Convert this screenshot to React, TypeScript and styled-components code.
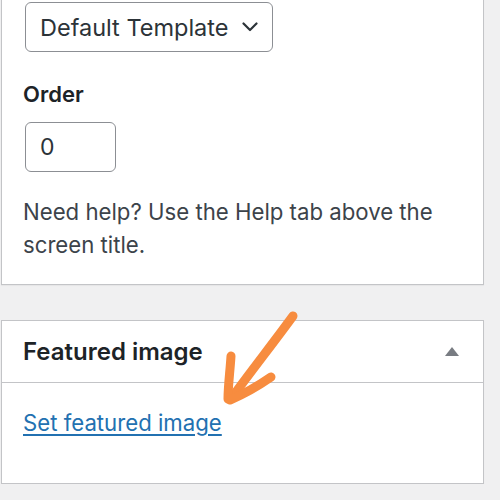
import React from "react";
import styled, { createGlobalStyle } from "styled-components";

const GlobalStyle = createGlobalStyle`
  html, body {
    margin: 0;
    padding: 0;
    background: #f0f0f1;
    overflow: hidden;
  }
  body {
    font-family: Inter, "Noto Sans", "Liberation Sans", sans-serif;
    color: #3c434a;
  }
`;

const Sidebar = styled.div`
  width: 483px;
  margin-left: 1px;
  display: flex;
  flex-direction: column;
  gap: 35px;
`;

const Panel = styled.section<{ $offset?: number }>`
  background: #fff;
  border: 1px solid #c3c4c7;
  margin-top: ${(p) => (p.$offset ? `-${p.$offset}px` : "0")};
  box-shadow: 0 1px 1px rgba(0, 0, 0, 0.04);
`;

const PanelBody = styled.div<{ $top: number; $bottom: number }>`
  padding: ${(p) => p.$top}px 21px ${(p) => p.$bottom}px 21px;
  display: flex;
  flex-direction: column;
  align-items: flex-start;
`;

const SelectBox = styled.div`
  box-sizing: border-box;
  width: 248px;
  height: 50px;
  margin-left: 2px;
  border: 1.5px solid #8c8f94;
  border-radius: 6px;
  display: flex;
  align-items: center;
  justify-content: space-between;
  padding: 0 14px 0 14px;
  font-size: 23.5px;
  color: #2c3338;
`;

const FieldLabel = styled.div`
  margin-top: 27px;
  font-size: 22px;
  line-height: 30px;
  font-weight: 600;
  color: #1d2327;
`;

const NumberBox = styled.div`
  box-sizing: border-box;
  width: 91px;
  height: 50px;
  margin-top: 13px;
  margin-left: 2px;
  border: 1.5px solid #8c8f94;
  border-radius: 6px;
  display: flex;
  align-items: center;
  padding-left: 14px;
  font-size: 23px;
  color: #2c3338;
`;

const HelpText = styled.p`
  margin: 23px 0 0;
  font-size: 22.2px;
  line-height: 33px;
  color: #3c434a;
  max-width: 440px;
`;

const PanelHeader = styled.header`
  height: 61px;
  border-bottom: 1px solid #c3c4c7;
  display: flex;
  align-items: center;
  justify-content: space-between;
  padding: 0 24px 0 21px;
`;

const PanelTitle = styled.h2`
  margin: 0;
  font-size: 24px;
  font-weight: 600;
  color: #1d2327;
`;

const ToggleArrow = styled.span`
  width: 0;
  height: 0;
  border-left: 7px solid transparent;
  border-right: 7px solid transparent;
  border-bottom: 9px solid #787c82;
`;

const ImageLink = styled.a`
  font-size: 22.2px;
  line-height: 30px;
  color: #2271b1;
  text-decoration: underline;
  text-underline-offset: 3px;
`;

const FeaturedBody = styled.div`
  position: relative;
  height: 100px;
  padding: 25px 21px 0;
  box-sizing: border-box;
`;

const Annotation = styled.svg`
  position: absolute;
  left: 200px;
  top: -80px;
  width: 110px;
  height: 140px;
  overflow: visible;
  pointer-events: none;
`;

function Chevron() {
  return (
    <svg width="16" height="10" viewBox="0 0 16 10" fill="none">
      <path
        d="M1.5 1.5 L8 8 L14.5 1.5"
        stroke="#2c3338"
        strokeWidth="2.2"
        strokeLinecap="round"
        strokeLinejoin="round"
      />
    </svg>
  );
}

export default function App() {
  return (
    <>
      <GlobalStyle />
      <Sidebar>
        <Panel $offset={31}>
          <PanelBody $top={32} $bottom={23}>
            <SelectBox>
              <span>Default Template</span>
              <Chevron />
            </SelectBox>
            <FieldLabel>Order</FieldLabel>
            <NumberBox>0</NumberBox>
            <HelpText>Need help? Use the Help tab above the screen title.</HelpText>
          </PanelBody>
        </Panel>
        <Panel>
          <PanelHeader>
            <PanelTitle>Featured image</PanelTitle>
            <ToggleArrow />
          </PanelHeader>
          <FeaturedBody>
            <ImageLink href="#">Set featured image</ImageLink>
            {/* hand-drawn pointer toward the link */}
            <Annotation viewBox="200 303 110 140">
              <g
                stroke="#f78c3f"
                strokeLinecap="round"
                strokeLinejoin="round"
                fill="none"
              >
                <path d="M291 316 C272 342 250 370 231 396" strokeWidth="9" />
                <path d="M229 356 C228 372 226 386 226 399" strokeWidth="9" />
                <path d="M269 377 C256 386 242 394 228 400" strokeWidth="9" />
              </g>
            </Annotation>
          </FeaturedBody>
        </Panel>
      </Sidebar>
    </>
  );
}
